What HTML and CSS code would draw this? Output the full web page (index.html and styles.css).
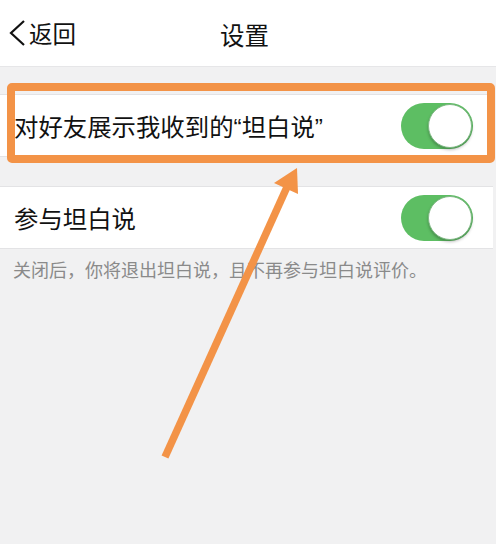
FILE: index.html
```html
<!DOCTYPE html>
<html lang="zh-CN">
<head>
<meta charset="utf-8">
<title>设置</title>
<link rel="stylesheet" href="styles.css">
</head>
<body>
<div class="page">
  <header class="nav">
    <div class="back">
      <svg class="chev" width="20" height="28" viewBox="0 0 20 28"><path d="M17 2 L4 14 L17 26" fill="none" stroke="#111" stroke-width="2.2" stroke-linejoin="miter"/></svg>
      <span>返回</span>
    </div>
    <div class="title">设置</div>
    <div></div>
  </header>
  <main class="content">
    <div class="row first">
      <span class="label">对好友展示我收到的“坦白说”</span>
      <span class="toggle"><span class="knob"></span></span>
    </div>
    <div class="row second">
      <span class="label">参与坦白说</span>
      <span class="toggle"><span class="knob"></span></span>
    </div>
    <p class="note">关闭后，你将退出坦白说，且不再参与坦白说评价。</p>
  </main>
  <div class="highlight"></div>
  <svg class="arrow" width="496" height="544" viewBox="0 0 496 544">
    <line x1="165" y1="457" x2="287" y2="187" stroke="#f39347" stroke-width="7.5"/>
    <polygon points="297,168 274,183 298,194" fill="#f39347"/>
  </svg>
</div>
</body>
</html>
```

FILE: styles.css
```css
* { box-sizing: border-box; }
html, body { margin: 0; padding: 0; }
body {
  background: #f1f1f2;
  font-family: "Liberation Sans", "Noto Sans CJK SC", sans-serif;
  color: #111;
}
.page {
  position: relative;
  width: 496px;
  height: 544px;
  overflow: hidden;
}
.nav {
  height: 67px;
  background: #fff;
  display: grid;
  grid-template-columns: 1fr auto 1fr;
  align-items: center;
  padding: 0 14px 0 7px;
  border-bottom: 1px solid #e6e6e8;
}
.back {
  display: flex;
  align-items: center;
  gap: 2px;
  font-size: 23.5px;
  margin-top: -1px;
}
.chev { display: block; }
.title {
  font-size: 24.5px;
  margin-top: 2px;
}
.content {
  padding-top: 27px;
  width: 493px;
}
.row {
  height: 63px;
  background: #fff;
  display: flex;
  align-items: center;
  justify-content: space-between;
  padding: 0 20px 0 14px;
  border-top: 1px solid #e3e3e5;
  border-bottom: 1px solid #e3e3e5;
}
.second { margin-top: 29px; }
.label {
  font-size: 24.4px;
}
.toggle {
  position: relative;
  width: 72px;
  height: 46px;
  border-radius: 23px;
  background: #5dbe63;
  flex: none;
}
.knob {
  position: absolute;
  right: 1px;
  top: 1px;
  width: 44px;
  height: 44px;
  border-radius: 50%;
  background: #fff;
  border: 1px solid #7fb884;
  box-shadow: 0 2px 3px rgba(0,0,0,0.25);
}
.note {
  margin: 10px 0 0 13px;
  font-size: 18px;
  line-height: 24px;
  color: #8a8a8a;
}
.highlight {
  position: absolute;
  left: 7px;
  top: 83px;
  width: 488px;
  height: 80px;
  border: 8px solid #f39347;
  border-radius: 5px;
}
.arrow {
  position: absolute;
  left: 0;
  top: 0;
}
```
